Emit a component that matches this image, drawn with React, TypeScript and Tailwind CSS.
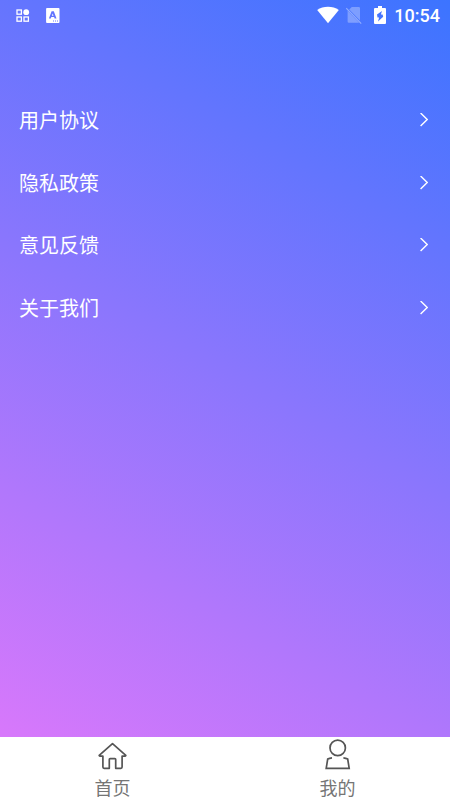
import { useState } from 'react';

type TabId = 'home' | 'mine';

const MENU_ITEMS = [
  { label: '用户协议', href: '#agreement' },
  { label: '隐私政策', href: '#privacy' },
  { label: '意见反馈', href: '#feedback' },
  { label: '关于我们', href: '#about' },
];

const TABS: { id: TabId; label: string }[] = [
  { id: 'home', label: '首页' },
  { id: 'mine', label: '我的' },
];

function AppsIcon() {
  return (
    <svg width="14" height="14" viewBox="0 0 14 14" fill="none" stroke="currentColor" strokeWidth="1.3" aria-hidden="true">
      <rect x="1" y="1" width="4.4" height="4.2" />
      <rect x="1" y="8" width="4.4" height="4.2" />
      <rect x="8" y="8" width="4.4" height="4.2" />
      <circle cx="10.2" cy="3.2" r="2.9" fill="currentColor" stroke="none" />
    </svg>
  );
}

function KeyboardIcon() {
  return (
    <svg width="14" height="16" viewBox="0 0 14 16" aria-hidden="true">
      <path
        fill="currentColor"
        fillRule="evenodd"
        d="M1 0h11.600q.9 0 .9.9v13.200q0 .9-.9.9H1q-.9 0-.9-.9V.9Q.1 0 1 0ZM5.600 3.200 2.900 10.500h1.900l.5-1.500h2.800l.5 1.500h1.900L7.800 3.200Zm1.100 2.200.8 2.300H5.900ZM7 12.600v1h1v-1Zm2 0v1h1v-1Zm2 0v1h1v-1Z"
      />
    </svg>
  );
}

function WifiIcon() {
  return (
    <svg width="22" height="18" viewBox="0 0 22 18" fill="currentColor" className="overflow-visible" aria-hidden="true">
      <path d="M11 16.300.2 3.100C3.300.7 7-.3 11-.3s7.700 1 10.800 3.400Z" />
    </svg>
  );
}

function NoSimIcon() {
  return (
    <svg width="16" height="18" viewBox="0 0 16 18" aria-hidden="true">
      <path d="M5.800 0H12.800q1.200 0 1.200 1.200V13.600L3.200 2.600ZM1.600 3.800 13.200 15.800H2.800Q1.600 15.800 1.600 14.600Z" fill="currentColor" opacity=".3" />
      <path d="M.2 1.200 15.200 16.600" stroke="currentColor" strokeWidth="1.200" opacity=".4" />
    </svg>
  );
}

function BatteryIcon() {
  return (
    <svg width="12" height="18" viewBox="0 0 12 18" className="overflow-visible" aria-hidden="true">
      <path
        fill="currentColor"
        fillRule="evenodd"
        d="M4-1h4v2h3q1 0 1 1v14q0 1-1 1H1q-1 0-1-1V2q0-1 1-1h3ZM8 4 3 7.400l.5 3h1.600L4 14.600 9.200 9.800 8.600 7.600H6.900Z"
      />
    </svg>
  );
}

function ArrowIcon() {
  return (
    <svg width="8" height="14" viewBox="0 0 8 14" fill="none" stroke="currentColor" strokeWidth="1.400" aria-hidden="true">
      <path d="M.6 0 7.200 6.500.6 13" />
    </svg>
  );
}

function HomeIcon() {
  return (
    <svg width="30" height="30" viewBox="0 0 30 30" fill="none" stroke="currentColor" strokeWidth="1.700" strokeLinejoin="round" className="overflow-visible" aria-hidden="true">
      <path d="M14.500 3.600 1.200 15.400q.3 1 1.300.8H4.900V27.100q0 1.200 1.200 1.200H11.300V19.500q0-.8.8-.8h4.800q.8 0 .8.8v8.800h5.200q1.200 0 1.200-1.200V16.200H26.500q1 .2 1.300-.8Z" />
    </svg>
  );
}

function MineIcon() {
  return (
    <svg width="30" height="30" viewBox="0 0 30 30" fill="none" stroke="currentColor" strokeWidth="1.700" className="overflow-visible" aria-hidden="true">
      <circle cx="14.700" cy="7.900" r="7.700" />
      <path d="M9 17.800Q6.500 18 4.700 19.100L3.200 28.300H26.200L24.700 19.100Q22.900 18 20.400 17.800" />
    </svg>
  );
}

function StatusBar() {
  return (
    <header className="flex h-[31px] items-center justify-between pr-[10px] pl-4 font-[Roboto,sans-serif]">
      <div className="flex items-center gap-4">
        <AppsIcon />
        <KeyboardIcon />
      </div>
      <div className="flex items-center">
        <WifiIcon />
        <span className="ml-[7px]">
          <NoSimIcon />
        </span>
        <span className="ml-[12px]">
          <BatteryIcon />
        </span>
        <time className="ml-[8px] text-[18px] leading-5 font-medium">10:54</time>
      </div>
    </header>
  );
}

export default function App() {
  const [activeTab, setActiveTab] = useState<TabId>('mine');

  return (
    <div className="flex min-h-screen flex-col bg-white font-['Noto_Sans_CJK_SC',sans-serif]">
      <div className="flex flex-1 flex-col bg-[linear-gradient(30deg,#d878fb,#3c74ff)] text-white">
        <StatusBar />
        <main className="pt-[58px]">
          <ul className="grid h-[250px] grid-rows-4">
            {MENU_ITEMS.map((item) => (
              <li key={item.label} className="flex">
                <a href={item.href} className="flex flex-1 items-center justify-between pr-[22px] pl-[19px] text-[20px] leading-6">
                  {item.label}
                  <ArrowIcon />
                </a>
              </li>
            ))}
          </ul>
        </main>
      </div>

      <nav className="grid h-[63px] grid-cols-2 text-[#555555]">
        {TABS.map((tab) => (
          <button
            key={tab.id}
            type="button"
            aria-current={activeTab === tab.id ? 'page' : undefined}
            onClick={() => setActiveTab(tab.id)}
            className="flex flex-col items-center pt-[3px] text-[18px] leading-6"
          >
            {tab.id === 'home' ? <HomeIcon /> : <MineIcon />}
            <span className="mt-[5px] text-[#757575]">{tab.label}</span>
          </button>
        ))}
      </nav>
    </div>
  );
}
